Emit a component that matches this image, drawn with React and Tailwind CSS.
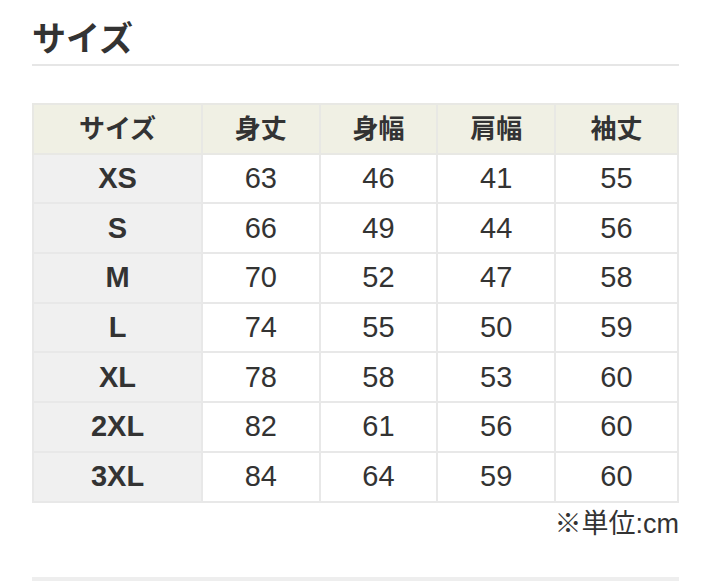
import React from 'react';

const headers = ['サイズ', '身丈', '身幅', '肩幅', '袖丈'];

const rows = [
    ['XS', 63, 46, 41, 55],
    ['S', 66, 49, 44, 56],
    ['M', 70, 52, 47, 58],
    ['L', 74, 55, 50, 59],
    ['XL', 78, 58, 53, 60],
    ['2XL', 82, 61, 56, 60],
    ['3XL', 84, 64, 59, 60],
];

const App = () => {
    return (
        <div className="bg-white min-h-[581px] px-8 pt-[17px] text-[#333] font-['Liberation_Sans','Noto_Sans_CJK_JP',sans-serif]">
            {/* Section heading */}
            <h2 className="text-[34px] font-bold leading-[44px] pb-[3px] border-b-2 border-[#e6e6e6]">サイズ</h2>

            <table className="w-full mt-[37px] border-collapse table-fixed">
                <colgroup>
                    <col className="w-[169px]" />
                    <col />
                    <col />
                    <col />
                    <col className="w-[123px]" />
                </colgroup>
                <thead>
                    <tr className="bg-[#f0f0e4]">
                        {headers.map((h) => (
                            <th key={h} className="h-[49.7px] border-2 border-[#e8e8e4] text-[26px] font-bold leading-none">
                                {h}
                            </th>
                        ))}
                    </tr>
                </thead>
                <tbody>
                    {rows.map((row) => (
                        <tr key={row[0]}>
                            {row.map((cell, i) => (
                                <td
                                    key={i}
                                    className={`h-[49.7px] border-2 border-[#e8e8e8] text-center text-[29px] leading-none ${i === 0 ? 'bg-[#f0f0f0] font-bold' : 'bg-white font-normal'}`}
                                >
                                    {cell}
                                </td>
                            ))}
                        </tr>
                    ))}
                </tbody>
            </table>

            <p className="text-right text-[27px] leading-8 mt-[5px]">※単位:cm</p>

            <div className="mt-[37px] h-4 bg-[#eeeeee]" />
        </div>
    );
};

export default App;
